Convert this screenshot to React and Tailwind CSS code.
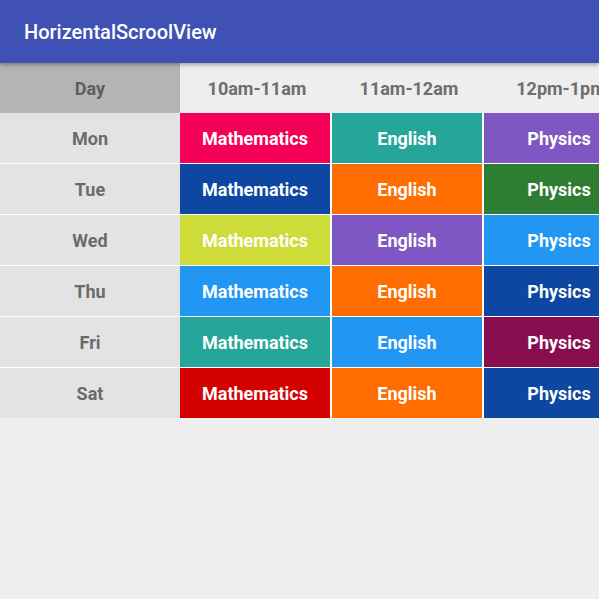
const slots = ['10am-11am', '11am-12am', '12pm-1pm']

const rows = [
  { day: 'Mon', colors: ['bg-[#f50057]', 'bg-[#26a69a]', 'bg-[#7e57c2]'] },
  { day: 'Tue', colors: ['bg-[#0d47a1]', 'bg-[#ff6d00]', 'bg-[#2e7d32]'] },
  { day: 'Wed', colors: ['bg-[#cddc39]', 'bg-[#7e57c2]', 'bg-[#2196f3]'] },
  { day: 'Thu', colors: ['bg-[#2196f3]', 'bg-[#ff6d00]', 'bg-[#0d47a1]'] },
  { day: 'Fri', colors: ['bg-[#26a69a]', 'bg-[#2196f3]', 'bg-[#880e4f]'] },
  { day: 'Sat', colors: ['bg-[#d50000]', 'bg-[#ff6d00]', 'bg-[#0d47a1]'] },
]

const subjects = ['Mathematics', 'English', 'Physics']

export default function App() {
  return (
    <div
      className="h-[599px] w-[599px] overflow-hidden bg-[#eeeeee]"
      style={{ fontFamily: 'Roboto, "Noto Sans", sans-serif' }}
    >
      <header className="relative z-10 flex h-[63px] items-center bg-[#3f51b5] px-6 shadow-[0_2px_4px_rgba(0,0,0,0.3)]">
        <h1 className="text-[20px] font-medium text-white">HorizentalScroolView</h1>
      </header>

      <div className="w-max">
        {/* ligne d'en-tête : jours + créneaux */}
        <div className="flex h-[50px] gap-[2px]">
          <div className="flex w-[180px] items-center justify-center bg-[#b4b4b4] pt-px text-[18px] font-bold text-[#5e5e5e]">
            Day
          </div>
          {slots.map((s) => (
            <div
              key={s}
              className="flex w-[150px] items-center justify-center pt-px text-[18px] font-bold text-[#6e6e6e]"
            >
              {s}
            </div>
          ))}
        </div>

        <div className="flex flex-col gap-px bg-white">
          {rows.map((r) => (
            <div key={r.day} className="flex h-[50px]">
              <div className="flex w-[180px] items-center justify-center bg-[#e3e3e3] pt-px text-[18px] font-bold text-[#6b6b6b]">
                {r.day}
              </div>
              <div className="flex gap-[2px]">
                {r.colors.map((c, i) => (
                  <div
                    key={i}
                    className={`flex w-[150px] items-center justify-center pt-px text-[18px] font-bold text-white ${c}`}
                  >
                    {subjects[i]}
                  </div>
                ))}
              </div>
            </div>
          ))}
        </div>
      </div>
    </div>
  )
}
